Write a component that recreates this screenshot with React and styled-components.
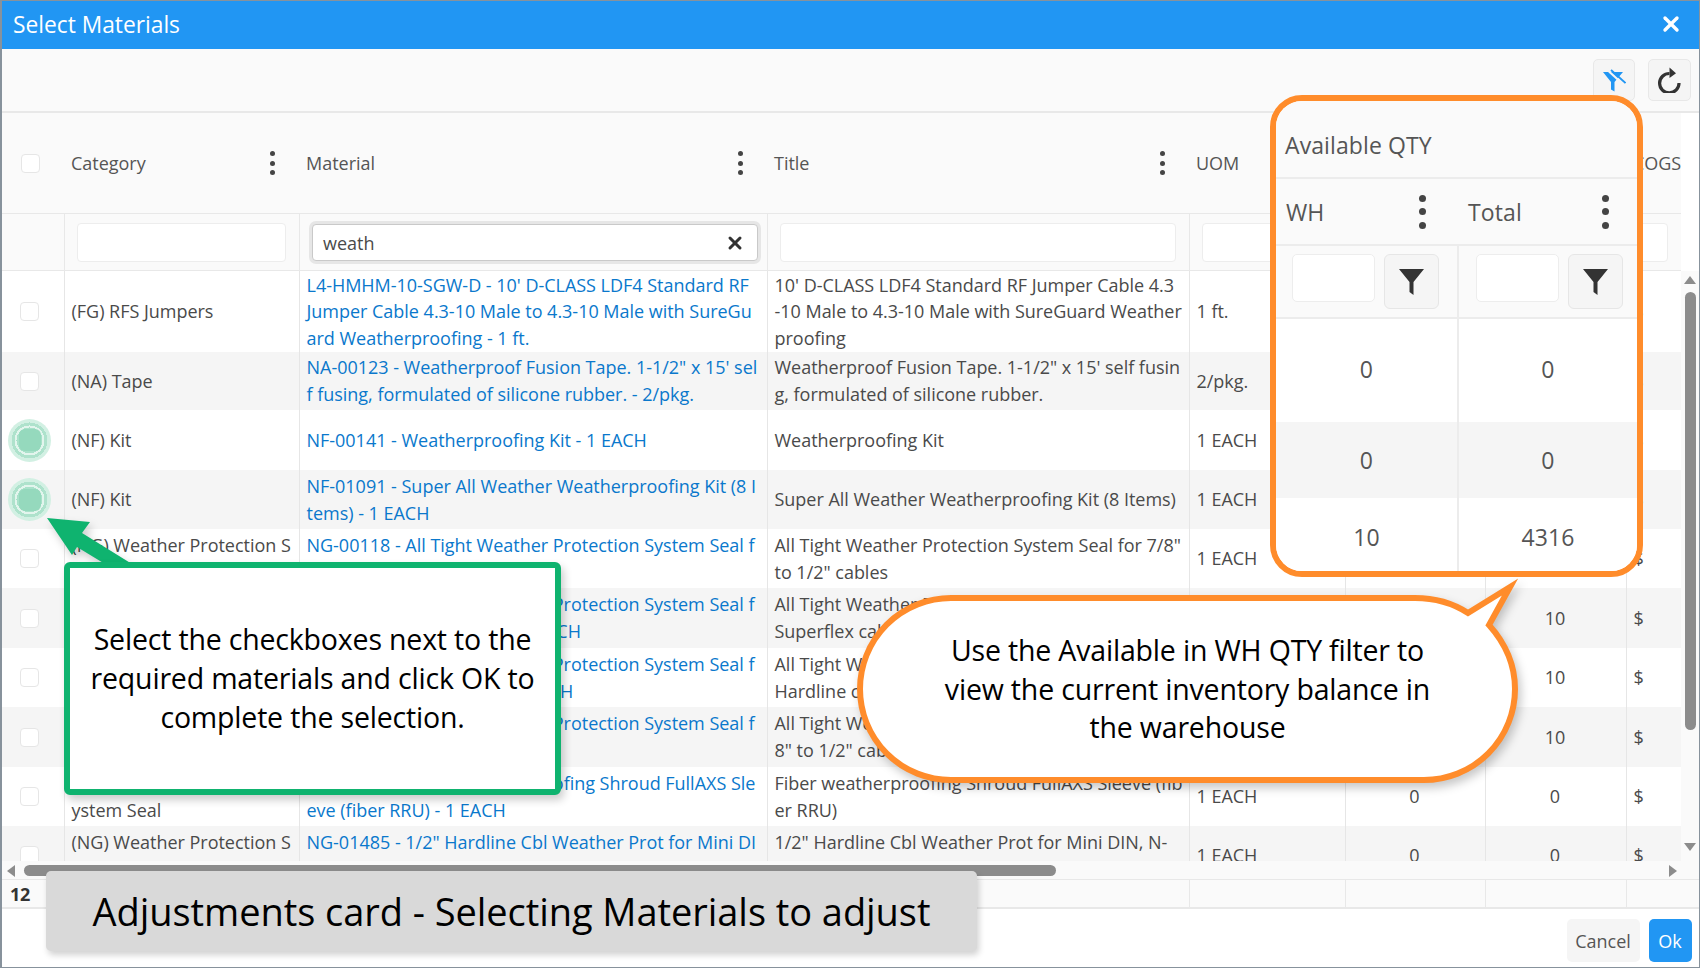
import React from 'react';
import styled, { createGlobalStyle } from 'styled-components';
import { X } from 'lucide-react';

const FONT = '"Open Sans", "Noto Sans", "Liberation Sans", sans-serif';
const COLUMNS = '62px 235px 468px 422px 156px 140px 141px 55px';

const Global = createGlobalStyle`
  html, body { margin: 0; padding: 0; background: #fff; }
  body { font-family: ${FONT}; overflow: hidden; }
  * { box-sizing: border-box; }
`;

const Page = styled.div`
  position: relative;
  width: 1700px;
  height: 968px;
  overflow: hidden;
`;
const Window = styled.div`
  width: 1700px;
  height: 968px;
  display: flex;
  flex-direction: column;
  border: 1px solid #87929c;
  border-left-width: 2px;
  background: #fff;
  font-size: 18px;
  letter-spacing: -0.02px;
  color: #4a4a4a;
`;
const TitleBar = styled.header`
  height: 48px;
  flex: none;
  background: #2196f3;
  color: #fff;
  display: flex;
  align-items: center;
  justify-content: space-between;
  padding: 0 16px 2px 11px;
  font-size: 22.8px;
`;
const Toolbar = styled.div`
  height: 64px;
  flex: none;
  background: #fafafa;
  border-bottom: 2px solid #e8e8e8;
  display: flex;
  justify-content: flex-end;
  align-items: flex-start;
  gap: 13px;
  padding: 10px 8px 0 0;
`;
const ToolButton = styled.button`
  width: ${p => p.$w}px;
  height: 42px;
  padding: 0;
  display: flex;
  align-items: center;
  justify-content: center;
  background: #f5f5f5;
  border: 1px solid #e8e8e8;
  border-radius: 5px;
`;
const HeaderRow = styled.div`
  height: 101px;
  flex: none;
  width: 1679px;
  display: grid;
  grid-template-columns: ${COLUMNS};
  background: #fafafa;
  border-bottom: 1px solid #e8e8e8;
`;
const HeadCell = styled.div`
  display: flex;
  align-items: center;
  justify-content: space-between;
  padding: 0 24px 0 7px;
  white-space: nowrap;
  color: #555;
`;
const CheckHead = styled.div`
  display: flex;
  align-items: center;
  padding-left: 19px;
`;
const Check = styled.span`
  display: block;
  width: 19px;
  height: 19px;
  border: 1px solid #e6e6e6;
  border-radius: 4px;
  background: #fff;
  flex: none;
`;
const Dots = styled.span`
  display: flex;
  flex-direction: column;
  align-items: center;
  gap: ${p => (p.$big ? 6.5 : 4.5)}px;
  flex: none;
  & > i {
    display: block;
    width: ${p => (p.$big ? 7 : 5)}px;
    height: ${p => (p.$big ? 7 : 5)}px;
    border-radius: 50%;
    background: #444;
  }
`;
const FilterRow = styled.div`
  height: 57px;
  flex: none;
  width: 1679px;
  display: grid;
  grid-template-columns: ${COLUMNS};
  background: #fafafa;
  border-bottom: 1px solid #e8e8e8;
`;
const FilterCell = styled.div`
  border-left: ${p => (p.$first ? 'none' : '1px solid #e8e8e8')};
  padding: 9px 13px 0 12px;
  overflow: hidden;
`;
const Input = styled.div`
  height: 39px;
  background: #fff;
  border: 1px solid #ededed;
  border-radius: 4px;
`;
const FocusInput = styled.div`
  height: 37px;
  margin: 1px -4px 0 0;
  background: #fff;
  border: 1px solid #c9c9c9;
  border-radius: 4px;
  box-shadow: 0 0 0 3px #e6e6e6;
  display: flex;
  align-items: center;
  justify-content: space-between;
  padding: 0 12px 0 10px;
`;
const BodyWrap = styled.div`
  height: 590px;
  flex: none;
  display: flex;
  background: #fafafa;
`;
const Rows = styled.div`
  width: 1679px;
  flex: none;
  overflow: hidden;
  background: #fff;
`;
const Row = styled.div`
  height: ${p => p.$h}px;
  display: grid;
  grid-template-columns: ${COLUMNS};
  background: ${p => (p.$alt ? '#f5f5f5' : '#fff')};
`;
const Cell = styled.div`
  border-left: 1px solid #e6e6e6;
  padding: 0 ${p => (p.$center ? 2 : 0)}px 0 ${p => (p.$center ? 0 : 6.5)}px;
  display: flex;
  flex-direction: column;
  justify-content: center;
  align-items: ${p => (p.$center ? 'center' : 'flex-start')};
  line-height: 26.6px;
  white-space: nowrap;
  overflow: hidden;
`;
const CheckCell = styled.div`
  display: flex;
  align-items: center;
  padding-left: 18px;
`;
const Pulse = styled.span`
  display: flex;
  align-items: center;
  justify-content: center;
  width: 43px;
  height: 43px;
  margin-left: -12px;
  border-radius: 50%;
  background: radial-gradient(
    circle,
    #a9e1ca 0 13px,
    #e2f5ed 13px 15px,
    #aee2cc 15px 18px,
    #d2f0e3 18px 21.5px
  );
`;
const PulseBox = styled.span`
  display: block;
  width: 22px;
  height: 22px;
  border-radius: 6px;
  background: #95d9bd;
`;
const Link = styled.span`
  color: #0a78cc;
`;
const VScroll = styled.div`
  width: 18px;
  flex: none;
  display: flex;
  flex-direction: column;
  align-items: center;
  padding-top: 5px;
`;
const Thumb = styled.div`
  background: #8c8c8c;
  border-radius: 6px;
  flex: none;
`;
const VThumb = styled(Thumb)`
  width: 11px;
  height: 438px;
  margin: 8px 0 113px;
`;
const Arrow = styled.span`
  display: block;
  width: 0;
  height: 0;
  flex: none;
  border-style: solid;
  border-color: transparent;
  ${p => p.$dir === 'up' && 'border-width: 0 6px 8px; border-bottom-color: #8c8c8c;'}
  ${p => p.$dir === 'down' && 'border-width: 8px 6px 0; border-top-color: #8c8c8c;'}
  ${p => p.$dir === 'left' && 'border-width: 6px 8px 6px 0; border-right-color: #8c8c8c;'}
  ${p => p.$dir === 'right' && 'border-width: 6px 0 6px 8px; border-left-color: #8c8c8c;'}
`;
const HScroll = styled.div`
  height: 19px;
  flex: none;
  background: #fafafa;
  display: flex;
  align-items: flex-start;
  padding: 4px 22px 0 5px;
  border-bottom: 1px solid #e8e8e8;
`;
const HThumb = styled(Thumb)`
  width: 1032px;
  height: 11px;
  margin-left: 9px;
  margin-right: auto;
`;
const FooterRow = styled.div`
  height: 29px;
  flex: none;
  background: #fafafa;
  border-bottom: 2px solid #e8e8e8;
  display: grid;
  grid-template-columns: ${COLUMNS} 1fr;
`;
const FootCell = styled.div`
  border-left: ${p => (p.$first || p.$plain ? 'none' : '1px solid #e8e8e8')};
  padding-left: ${p => (p.$first ? 8 : 7)}px;
  font-weight: 700;
  letter-spacing: -0.4px;
  color: #333;
  line-height: 28px;
`;
const Actions = styled.footer`
  flex: 1;
  display: flex;
  justify-content: flex-end;
  align-items: flex-start;
  gap: 9px;
  padding: 10px 7.5px 0 0;
  background: #fff;
`;
const CancelButton = styled.button`
  width: 73px;
  height: 43px;
  padding: 0;
  border: none;
  border-radius: 5px;
  background: #f5f5f5;
  color: #555;
  font: inherit;
  letter-spacing: 0;
`;
const OkButton = styled(CancelButton)`
  width: 43px;
  background: #2196f3;
  color: #fff;
`;

const QtyPanel = styled.section`
  position: absolute;
  left: 1270px;
  top: 95px;
  width: 373px;
  height: 482px;
  border: 6px solid #ff8c2b;
  border-radius: 32px;
  background: #fff;
  overflow: hidden;
  font-size: 23px;
  letter-spacing: 0.1px;
  color: #555;
`;
const PanelTitle = styled.div`
  height: 78px;
  background: #fafafa;
  border-bottom: 2px solid #ececec;
  display: flex;
  align-items: center;
  padding: 12px 0 0 9px;
`;
const PanelGrid = styled.div`
  display: grid;
  grid-template-columns: 181px 180px;
  height: ${p => p.$h}px;
  background: ${p => p.$bg};
  border-bottom: ${p => (p.$line ? '2px solid #ececec' : 'none')};
`;
const PanelHead = styled.div`
  display: flex;
  align-items: center;
  justify-content: space-between;
  padding: 0 ${p => p.$right}px 0 ${p => p.$left}px;
`;
const PanelFilter = styled.div`
  display: flex;
  align-items: flex-start;
  gap: 9px;
  padding: 8px 0 0 ${p => p.$left}px;
  border-left: ${p => (p.$border ? '2px solid #ececec' : 'none')};
`;
const PanelInput = styled.div`
  width: 83px;
  height: 48px;
  background: #fff;
  border: 1px solid #ededed;
  border-radius: 5px;
`;
const PanelButton = styled.div`
  width: 55px;
  height: 55px;
  background: #f5f5f5;
  border: 1px solid #e6e6e6;
  border-radius: 6px;
  display: flex;
  align-items: center;
  justify-content: center;
`;
const PanelValue = styled.div`
  display: flex;
  align-items: center;
  justify-content: center;
  border-left: ${p => (p.$border ? '2px solid #ececec' : 'none')};
  padding-bottom: ${p => p.$pb || 0}px;
`;

const GreenNote = styled.div`
  position: absolute;
  left: 64px;
  top: 562px;
  width: 497px;
  height: 233px;
  background: #fff;
  border: 6px solid #0fb36f;
  border-radius: 6px;
  box-shadow: 3px 5px 8px rgba(0, 0, 0, 0.2);
  display: flex;
  align-items: center;
  justify-content: center;
  text-align: center;
  color: #000;
`;
const NoteText = styled.div`
  font-size: 28.5px;
  line-height: 38.8px;
  letter-spacing: -0.18px;
  color: #000;
  white-space: nowrap;
`;
const GreenArrow = styled.svg`
  position: absolute;
  left: 40px;
  top: 510px;
  width: 100px;
  height: 60px;
  filter: drop-shadow(3px 5px 4px rgba(0, 0, 0, 0.2));
`;
const Bubble = styled.div`
  position: absolute;
  left: 850px;
  top: 572px;
  width: 680px;
  height: 223px;
  padding: 23px 12px 12px 7px;
  display: flex;
  align-items: center;
  justify-content: center;
  text-align: center;
`;
const BubbleShape = styled.svg`
  position: absolute;
  inset: 0;
  width: 680px;
  height: 223px;
  filter: drop-shadow(3px 5px 5px rgba(0, 0, 0, 0.22));
`;
const BubbleText = styled(NoteText)`
  position: relative;
`;
const Caption = styled.div`
  position: absolute;
  left: 46px;
  top: 871px;
  width: 931px;
  height: 80px;
  background: #d9d9d9;
  border-radius: 5px;
  box-shadow: 2px 4px 6px rgba(0, 0, 0, 0.18);
  display: flex;
  align-items: center;
  justify-content: center;
  font-size: 38px;
  letter-spacing: -0.06px;
  color: #000;
  white-space: nowrap;
`;

const Kebab = ({ big }) => (
  <Dots $big={big}>
    <i />
    <i />
    <i />
  </Dots>
);

const FunnelOff = () => (
  <svg width="23" height="23" viewBox="0 0 23 23">
    <path d="M0 3H20L11.5 13V22.5L8 20.5V13Z" fill="#2196f3" />
    <path d="M6 2.5L22 17" stroke="#f5f5f5" strokeWidth="2.2" />
    <path d="M8 1L22.5 14" stroke="#2196f3" strokeWidth="1.8" />
  </svg>
);
const Refresh = () => (
  <svg width="25" height="26" viewBox="0 0 25 26">
    <path d="M12.5 6.5A9.7 9.7 0 1 0 22 16" fill="none" stroke="#333" strokeWidth="3.2" />
    <path d="M12.5 0.5L19 6.3L12.5 11Z" fill="#333" />
  </svg>
);
const Funnel = () => (
  <svg width="25" height="26" viewBox="0 0 25 26">
    <path d="M0 0H25L14.5 13V26L10.5 23V13Z" fill="#333" />
  </svg>
);

const rows = [
  { h: 81, cat: ['(FG) RFS Jumpers'], mat: ["L4-HMHM-10-SGW-D - 10' D-CLASS LDF4 Standard RF", 'Jumper Cable 4.3-10 Male to 4.3-10 Male with SureGu', 'ard Weatherproofing - 1 ft.'], title: ["10' D-CLASS LDF4 Standard RF Jumper Cable 4.3", '-10 Male to 4.3-10 Male with SureGuard Weather', 'proofing'], uom: '1 ft.', wh: '0', total: '0' },
  { h: 58, cat: ['(NA) Tape'], mat: ['NA-00123 - Weatherproof Fusion Tape. 1-1/2" x 15\' sel', 'f fusing, formulated of silicone rubber. - 2/pkg.'], title: ['Weatherproof Fusion Tape. 1-1/2" x 15\' self fusin', 'g, formulated of silicone rubber.'], uom: '2/pkg.', wh: '0', total: '0' },
  { h: 60, pick: true, cat: ['(NF) Kit'], mat: ['NF-00141 - Weatherproofing Kit - 1 EACH'], title: ['Weatherproofing Kit'], uom: '1 EACH', wh: '0', total: '0' },
  { h: 59, pick: true, cat: ['(NF) Kit'], mat: ['NF-01091 - Super All Weather Weatherproofing Kit (8 I', 'tems) - 1 EACH'], title: ['Super All Weather Weatherproofing Kit (8 Items)'], uom: '1 EACH', wh: '10', total: '10' },
  { h: 59, cat: ['(NG) Weather Protection S', 'ystem Seal'], mat: ['NG-00118 - All Tight Weather Protection System Seal f', 'or 7/8" to 1/2" cables - 1 EACH'], title: ['All Tight Weather Protection System Seal for 7/8"', 'to 1/2" cables'], uom: '1 EACH', wh: '10', total: '10' },
  { h: 60, cat: ['(NG) Weather Protection S', 'ystem Seal'], mat: ['NG-00119 - All Tight Weather Protection System Seal f', 'or 1/2" Superflex cables - 1 EACH'], title: ['All Tight Weather Protection System Seal for 1/2"', 'Superflex cables'], uom: '1 EACH', wh: '10', total: '10' },
  { h: 59, cat: ['(NG) Weather Protection S', 'ystem Seal'], mat: ['NG-00120 - All Tight Weather Protection System Seal f', 'or 1/2" Hardline cables - 1 EACH'], title: ['All Tight Weather Protection System Seal for 1/2"', 'Hardline cables'], uom: '1 EACH', wh: '10', total: '10' },
  { h: 60, cat: ['(NG) Weather Protection S', 'ystem Seal'], mat: ['NG-00121 - All Tight Weather Protection System Seal f', 'or 7/8" to 1/2" cables - 1 EACH'], title: ['All Tight Weather Protection System Seal for 7/', '8" to 1/2" cables'], uom: '1 EACH', wh: '10', total: '10' },
  { h: 59, cat: ['(NG) Weather Protection S', 'ystem Seal'], mat: ['NG-01209 - Fiber Weatherproofing Shroud FullAXS Sle', 'eve (fiber RRU) - 1 EACH'], title: ['Fiber weatherproofing Shroud FullAXS Sleeve (fib', 'er RRU)'], uom: '1 EACH', wh: '0', total: '0' },
  { h: 59, cat: ['(NG) Weather Protection S', 'ystem Seal'], mat: ['NG-01485 - 1/2" Hardline Cbl Weather Prot for Mini DI', 'N, N-Type - 1 EACH'], title: ['1/2" Hardline Cbl Weather Prot for Mini DIN, N-', 'Type'], uom: '1 EACH', wh: '0', total: '0' },
];

const Lines = ({ items }) => items.map(t => <div key={t}>{t}</div>);

export default function App() {
  return (
    <Page>
      <Global />
      <Window>
        <TitleBar>
          <span>Select Materials</span>
          <X size={24} strokeWidth={3.4} color="#fff" />
        </TitleBar>
        <Toolbar>
          <ToolButton $w={42}><FunnelOff /></ToolButton>
          <ToolButton $w={43}><Refresh /></ToolButton>
        </Toolbar>
        <HeaderRow>
          <CheckHead><Check /></CheckHead>
          <HeadCell>Category<Kebab /></HeadCell>
          <HeadCell>Material<Kebab /></HeadCell>
          <HeadCell>Title<Kebab /></HeadCell>
          <HeadCell>UOM</HeadCell>
          <HeadCell />
          <HeadCell />
          <HeadCell>COGS</HeadCell>
        </HeaderRow>
        <FilterRow>
          <FilterCell $first />
          <FilterCell><Input /></FilterCell>
          <FilterCell>
            <FocusInput>weath<X size={20} strokeWidth={3.6} color="#333" /></FocusInput>
          </FilterCell>
          <FilterCell><Input /></FilterCell>
          <FilterCell><Input /></FilterCell>
          <FilterCell><Input /></FilterCell>
          <FilterCell><Input /></FilterCell>
          <FilterCell><Input /></FilterCell>
        </FilterRow>
        <BodyWrap>
          <Rows>
            {rows.map((r, i) => (
              <Row key={r.mat[0]} $h={r.h} $alt={i % 2 === 1}>
                <CheckCell>{r.pick ? <Pulse><PulseBox /></Pulse> : <Check />}</CheckCell>
                <Cell><Lines items={r.cat} /></Cell>
                <Cell><Link><Lines items={r.mat} /></Link></Cell>
                <Cell><Lines items={r.title} /></Cell>
                <Cell>{r.uom}</Cell>
                <Cell $center>{r.wh}</Cell>
                <Cell $center>{r.total}</Cell>
                <Cell>$</Cell>
              </Row>
            ))}
          </Rows>
          <VScroll>
            <Arrow $dir="up" />
            <VThumb />
            <Arrow $dir="down" />
          </VScroll>
        </BodyWrap>
        <HScroll>
          <Arrow $dir="left" />
          <HThumb />
          <Arrow $dir="right" />
        </HScroll>
        <FooterRow>
          <FootCell $first>12</FootCell>
          <FootCell />
          <FootCell />
          <FootCell />
          <FootCell />
          <FootCell />
          <FootCell />
          <FootCell />
          <FootCell $plain />
        </FooterRow>
        <Actions>
          <CancelButton>Cancel</CancelButton>
          <OkButton>Ok</OkButton>
        </Actions>
      </Window>

      <QtyPanel>
        <PanelTitle>Available QTY</PanelTitle>
        <PanelGrid $h={67} $bg="#fafafa" $line>
          <PanelHead $left={10} $right={31}>WH<Kebab big /></PanelHead>
          <PanelHead $left={11} $right={28}>Total<Kebab big /></PanelHead>
        </PanelGrid>
        <PanelGrid $h={73} $bg="#fafafa" $line>
          <PanelFilter $left={16}><PanelInput /><PanelButton><Funnel /></PanelButton></PanelFilter>
          <PanelFilter $left={17} $border><PanelInput /><PanelButton><Funnel /></PanelButton></PanelFilter>
        </PanelGrid>
        <PanelGrid $h={103} $bg="#fff">
          <PanelValue $pb={4}>0</PanelValue>
          <PanelValue $border $pb={4}>0</PanelValue>
        </PanelGrid>
        <PanelGrid $h={76} $bg="#f5f5f5">
          <PanelValue>0</PanelValue>
          <PanelValue $border>0</PanelValue>
        </PanelGrid>
        <PanelGrid $h={80} $bg="#fff">
          <PanelValue $pb={2}>10</PanelValue>
          <PanelValue $border $pb={2}>4316</PanelValue>
        </PanelGrid>
      </QtyPanel>

      <GreenArrow viewBox="40 510 100 60">
        <path d="M47 518L90 522L82 533L132 564L105 564L77 547L72 555Z" fill="#0fb36f" />
      </GreenArrow>
      <GreenNote>
        <NoteText>
          Select the checkboxes next to the<br />
          required materials and click OK to<br />
          complete the selection.
        </NoteText>
      </GreenNote>

      <Bubble>
        <BubbleShape viewBox="850 572 680 223">
          <path
            d="M951 598H1415Q1445 598 1468 613L1510 587L1489 625Q1515 654 1515 689A91 91 0 0 1 1424 780H951A91 91 0 0 1 860 689A91 91 0 0 1 951 598Z"
            fill="#fff"
            stroke="#ff8c2b"
            strokeWidth="6"
            strokeMiterlimit="12"
          />
        </BubbleShape>
        <BubbleText>
          Use the Available in WH QTY filter to<br />
          view the current inventory balance in<br />
          the warehouse
        </BubbleText>
      </Bubble>

      <Caption>Adjustments card - Selecting Materials to adjust</Caption>
    </Page>
  );
}
